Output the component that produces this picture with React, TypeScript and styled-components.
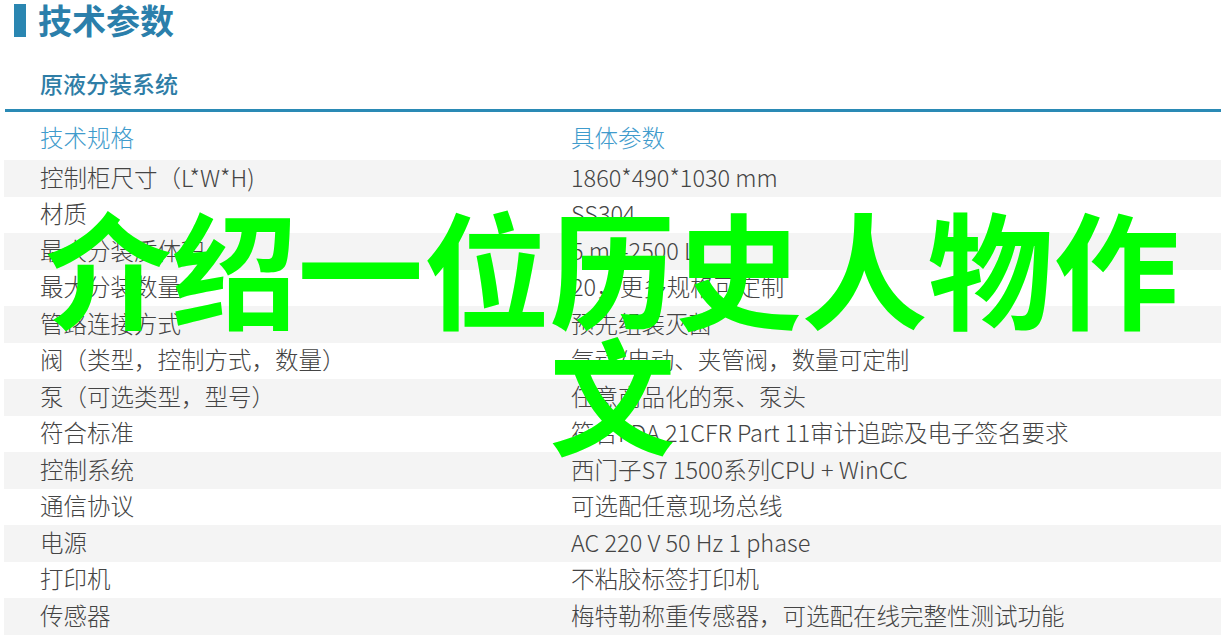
import React from "react";
import styled, { createGlobalStyle } from "styled-components";

const GlobalStyle = createGlobalStyle`
  html, body {
    margin: 0;
    padding: 0;
    background: #ffffff;
  }
  body {
    font-family: "Noto Sans CJK SC", "Noto Sans", sans-serif;
    color: #444444;
  }
`;

const Page = styled.div`
  position: relative;
  width: 1225px;
  height: 641px;
  overflow: hidden;
  background: #ffffff;
`;

const TitleRow = styled.div`
  display: flex;
  align-items: center;
  gap: 12px;
  height: 40px;
  padding-left: 14px;
`;

const TitleBar = styled.span`
  display: block;
  width: 12px;
  height: 33px;
  background: #2a86b1;
`;

const Title = styled.h1`
  margin: 0;
  font-size: 34px;
  line-height: 40px;
  font-weight: 700;
  color: #2b7fab;
`;

const Subtitle = styled.h2`
  margin: 24.5px 0 0 40px;
  font-size: 23px;
  line-height: 36px;
  font-weight: 500;
  color: #2e7da6;
`;

const Rule = styled.div`
  margin: 8px 4px 0 5px;
  height: 3px;
  background: #2a8ab5;
`;

const Table = styled.div`
  margin: 0 4px 0 4px;
  display: flex;
  flex-direction: column;
`;

const Row = styled.div<{ $striped?: boolean; $head?: boolean }>`
  display: grid;
  grid-template-columns: 531px 1fr;
  align-items: center;
  height: ${(p) => (p.$head ? "48.5px" : "36.5px")};
  padding-top: ${(p) => (p.$head ? "3px" : "0")};
  padding-bottom: ${(p) => (p.$head ? "0" : "3px")};
  box-sizing: border-box;
  background: ${(p) => (p.$striped ? "#f4f4f4" : "transparent")};
`;

const Cell = styled.div<{ $head?: boolean }>`
  padding-left: 36px;
  font-size: 23.5px;
  line-height: 30px;
  font-weight: 300;
  white-space: nowrap;
  color: ${(p) => (p.$head ? "#3f9bcc" : "#444444")};
`;

const Overlay = styled.div`
  position: absolute;
  top: 202px;
  left: 0;
  right: 0;
  text-align: center;
  font-size: 126px;
  line-height: 126px;
  font-weight: 700;
  color: #00ff00;
  pointer-events: none;
`;

const rows: [string, string][] = [
  ["控制柜尺寸（L*W*H)", "1860*490*1030 mm"],
  ["材质", "SS304"],
  ["最大分装质体积", "5 mL-2500 L"],
  ["最大分装数量", "20，更多规格可定制"],
  ["管路连接方式", "预先组装灭菌"],
  ["阀（类型，控制方式，数量）", "气动/电动、夹管阀，数量可定制"],
  ["泵（可选类型，型号）", "任意商品化的泵、泵头"],
  ["符合标准", "符合FDA 21CFR Part 11审计追踪及电子签名要求"],
  ["控制系统", "西门子S7 1500系列CPU + WinCC"],
  ["通信协议", "可选配任意现场总线"],
  ["电源", "AC 220 V 50 Hz 1 phase"],
  ["打印机", "不粘胶标签打印机"],
  ["传感器", "梅特勒称重传感器，可选配在线完整性测试功能"],
];

export default function App() {
  return (
    <Page>
      <GlobalStyle />
      <TitleRow>
        <TitleBar />
        <Title>技术参数</Title>
      </TitleRow>
      <Subtitle>原液分装系统</Subtitle>
      <Rule />
      <Table>
        <Row $head>
          <Cell $head>技术规格</Cell>
          <Cell $head>具体参数</Cell>
        </Row>
        {rows.map(([k, v], i) => (
          <Row key={k} $striped={i % 2 === 0}>
            <Cell>{k}</Cell>
            <Cell>{v}</Cell>
          </Row>
        ))}
      </Table>
      <Overlay>介绍一位历史人物作文</Overlay>
    </Page>
  );
}
